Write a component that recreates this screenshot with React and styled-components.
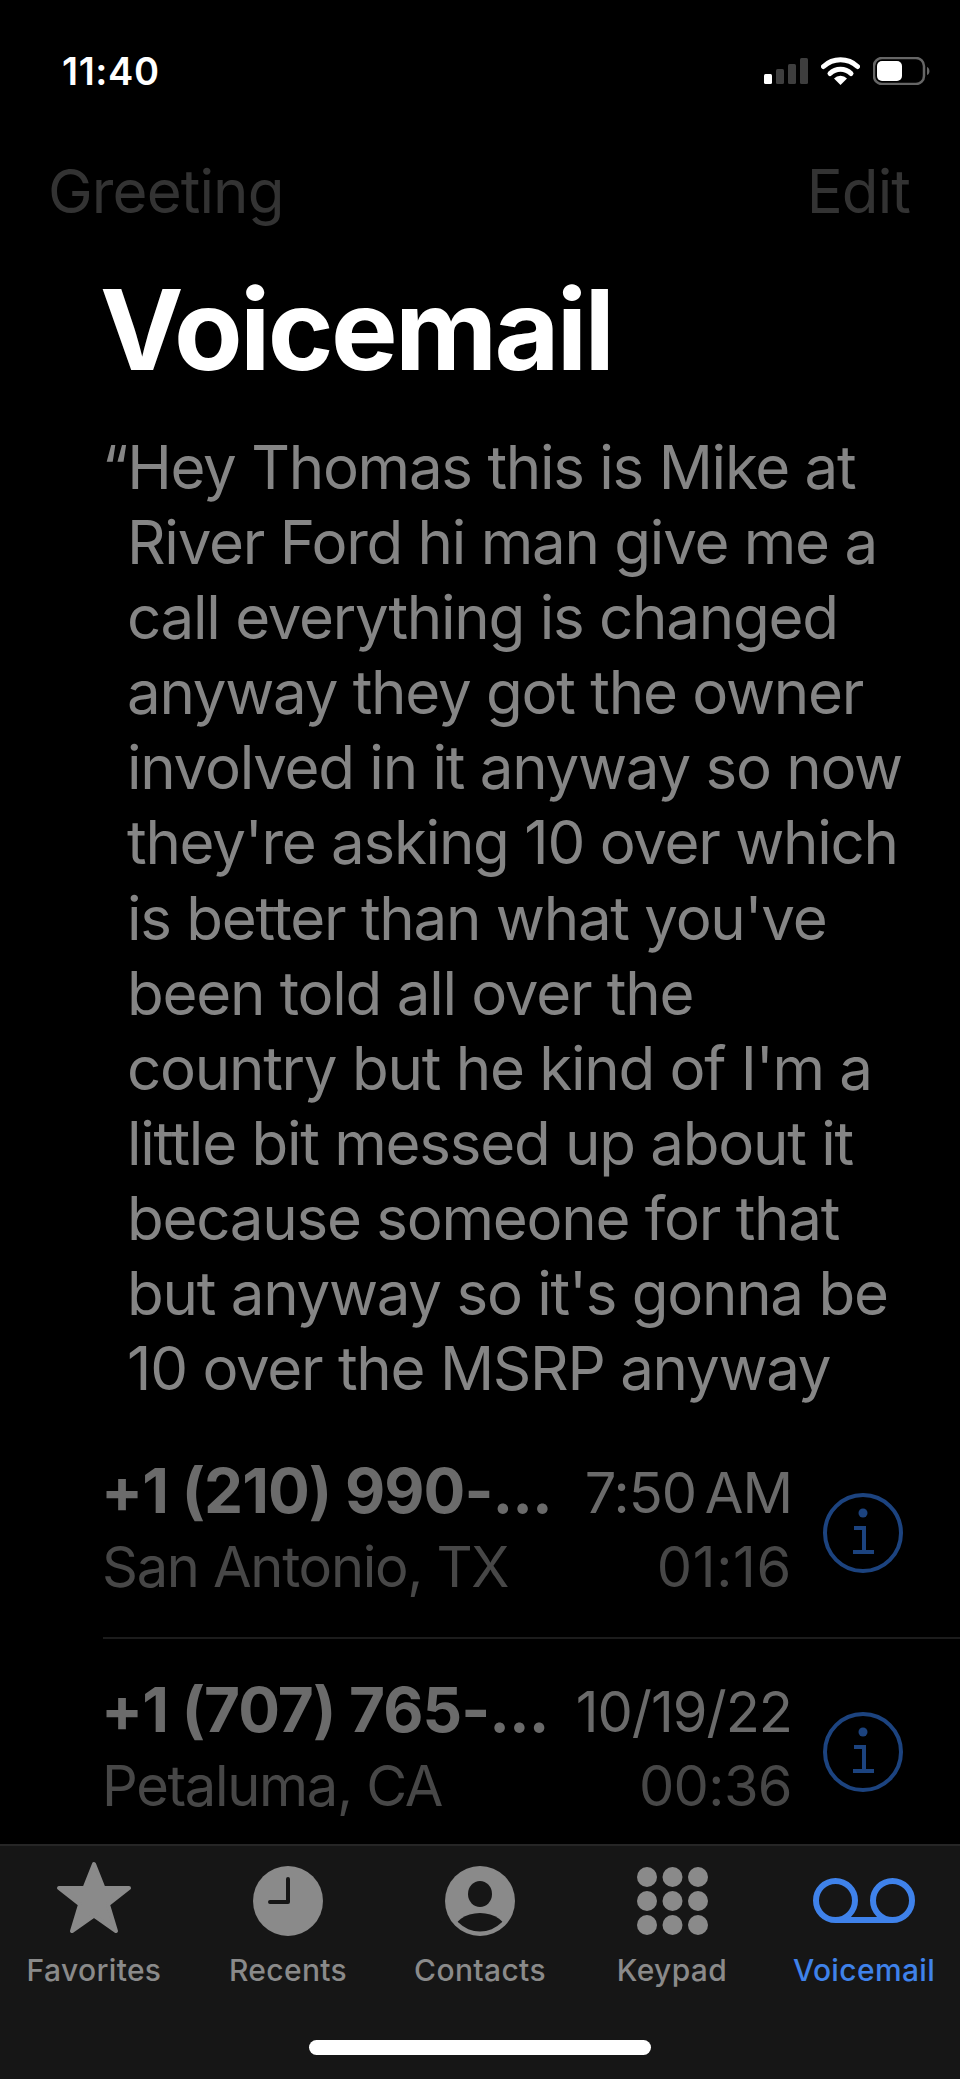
import React from "react";
import styled, { createGlobalStyle } from "styled-components";

const Global = createGlobalStyle`
  html, body { margin: 0; padding: 0; background: #000; }
  * { box-sizing: border-box; }
`;
const Screen = styled.div`
  width: 960px; height: 2079px; background: #000; overflow: hidden;
  display: flex; flex-direction: column;
  font-family: Inter, "Liberation Sans", sans-serif;
`;
const Main = styled.main`flex: 1; min-height: 0; overflow: hidden; display: flex; flex-direction: column;`;
const StatusBar = styled.div`
  height: 141px; flex: none; display: flex; justify-content: space-between; align-items: center;
  padding: 0 29px 0 62px;
`;
const Time = styled.span`color: #fff; font-size: 38px; font-weight: 600; letter-spacing: 0.6px;`;
const StatusIcons = styled.div`display: flex; align-items: center; gap: 13px;`;
const Nav = styled.div`
  height: 100px; flex: none; display: flex; justify-content: space-between; align-items: center;
  padding: 0 50px 0 48px;
  color: #333;
  font-size: 60px; font-weight: 400; letter-spacing: -0.9px;
`;
const Title = styled.h1`
  margin: 23px 0 0; padding-left: 100px; color: #fff; flex: none;
  font-size: 112px; line-height: 130px; font-weight: 700; letter-spacing: -2.7px;
`;
const Transcript = styled.div`
  margin: 36px 0 15px; padding-left: 127px; color: #858585; flex: none;
  font-size: 60px; line-height: 75.1px; letter-spacing: -1.25px; white-space: nowrap;
`;
const Line = styled.div`&:first-child { text-indent: -25px; }`;
const Row = styled.div`
  display: flex; align-items: center; margin-left: 103px; height: 218px; flex: none; padding-right: 57px;
  border-bottom: ${p => (p.$last ? "0" : "2px solid #1c1c1c")};
`;
const RowText = styled.div`flex: 1; min-width: 0; display: flex; flex-direction: column; gap: 2px;`;
const RowLine = styled.div`display: flex; justify-content: space-between; align-items: baseline; height: 74px; line-height: 74px; padding-right: 31px;`;
const Name = styled.span`color: #6b6b6b; font-size: 62px; font-weight: 700; letter-spacing: -0.95px; margin-left: -2px;`;
const When = styled.span`color: #6a6a6a; font-size: 56px; letter-spacing: -1px; word-spacing: -6px;`;
const Sub = styled.span`color: #474747; font-size: 56px; letter-spacing: -1.3px; margin-left: -1px;`;
const Duration = styled.span`color: #474747; font-size: 56px; letter-spacing: ${p => p.$track}px;`;
const InfoBox = styled.div`margin-top: 7px; display: flex;`;
const TabBar = styled.nav`
  height: 235px; flex: none; background: #161616; border-top: 2px solid #262626; position: relative;
  display: grid; grid-template-columns: repeat(5, 192px);
`;
const Tab = styled.div`
  display: flex; flex-direction: column; align-items: center; padding-top: 9px;
  color: ${p => (p.$active ? "#3f82ea" : "#8a8a8a")};
  &:first-child { padding-right: 4px; }
`;
const TabIcon = styled.div`height: 92px; display: flex; align-items: center; justify-content: center;`;
const TabLabel = styled.span`font-size: 30px; line-height: 36px; font-weight: 500; margin-top: 5px; letter-spacing: 0.35px;`;
const HomeBar = styled.div`
  position: absolute; left: 309px; top: 194px; width: 342px; height: 15px; border-radius: 8px; background: #fff;
`;

const Signal = () => (
  <svg width="44" height="26" viewBox="0 0 44 26">
    <rect x="0" y="16" width="8" height="10" rx="1.5" fill="#fff" />
    <rect x="12" y="11" width="8" height="15" rx="1.5" fill="#3e3e3e" />
    <rect x="24" y="6" width="8" height="20" rx="1.5" fill="#3e3e3e" />
    <rect x="36" y="0" width="8" height="26" rx="1.5" fill="#3e3e3e" />
  </svg>
);
const Wifi = () => (
  <svg width="39" height="28" viewBox="0 0 39 28">
    <path d="M2.5 9.5 A25 25 0 0 1 36.5 9.5" fill="none" stroke="#fff" strokeWidth="5" strokeLinecap="round" />
    <path d="M9 16.5 A15 15 0 0 1 30 16.5" fill="none" stroke="#fff" strokeWidth="5" strokeLinecap="round" />
    <path d="M13 21.5 A9 9 0 0 1 26 21.5 L19.5 28 Z" fill="#fff" />
  </svg>
);
const Battery = () => (
  <svg width="58" height="28" viewBox="0 0 58 28">
    <rect x="1" y="1" width="50" height="26" rx="8" fill="none" stroke="#666" strokeWidth="2.5" />
    <rect x="4" y="4" width="25" height="20" rx="5" fill="#fff" />
    <path d="M54 10 C57 11 57.5 17 54 18 Z" fill="#666" />
  </svg>
);
const Info = () => (
  <svg width="80" height="80" viewBox="0 0 80 80" fill="none">
    <circle cx="40" cy="40" r="38" stroke="#1c437f" strokeWidth="4" />
    <circle cx="40" cy="20" r="4.5" fill="#1c437f" />
    <path d="M31 35 H41 V58 M30 59 H51" stroke="#1c437f" strokeWidth="4" />
  </svg>
);
const Star = () => (
  <svg width="76" height="80" viewBox="0 0 76 80">
    <path d="M38 3 L47.5 27 L73 27 L52 43.5 L60 70 L38 54.5 L16 70 L24 43.5 L3 27 L28.5 27 Z"
      fill="currentColor" stroke="currentColor" strokeWidth="4" strokeLinejoin="round" />
  </svg>
);
const Clock = () => (
  <svg width="70" height="70" viewBox="0 0 70 70">
    <circle cx="35" cy="35" r="35" fill="currentColor" />
    <path d="M35 13 V36 H17" fill="none" stroke="#161616" strokeWidth="4" strokeLinecap="round" strokeLinejoin="round" />
  </svg>
);
const Contact = () => (
  <svg width="70" height="70" viewBox="0 0 70 70">
    <defs><clipPath id="cc"><circle cx="35" cy="35" r="30.5" /></clipPath></defs>
    <circle cx="35" cy="35" r="35" fill="currentColor" />
    <ellipse cx="35" cy="28" rx="12" ry="13" fill="#161616" />
    <ellipse cx="35" cy="67" rx="27" ry="20" fill="#161616" clipPath="url(#cc)" />
  </svg>
);
const Keypad = () => (
  <svg width="71" height="68" viewBox="0 0 71 68" fill="currentColor">
    {[10, 34, 58].map(y => [10, 35.5, 61].map(x => <circle key={`${x}-${y}`} cx={x} cy={y} r="10" />))}
  </svg>
);
const VoicemailIcon = () => (
  <svg width="102" height="46" viewBox="0 0 102 46" fill="none" stroke="currentColor" strokeWidth="6">
    <circle cx="22.5" cy="22.5" r="19.5" />
    <circle cx="79.5" cy="22.5" r="19.5" />
    <path d="M22.5 42 H79.5" />
  </svg>
);

const lines = [
  "“Hey Thomas this is Mike at",
  "River Ford hi man give me a",
  "call everything is changed",
  "anyway they got the owner",
  "involved in it anyway so now",
  "they're asking 10 over which",
  "is better than what you've",
  "been told all over the",
  "country but he kind of I'm a",
  "little bit messed up about it",
  "because someone for that",
  "but anyway so it's gonna be",
  "10 over the MSRP anyway",
];
const calls = [
  { name: "+1 (210) 990-...", when: "7:50 AM", place: "San Antonio, TX", len: "01:16", track: 0.7 },
  { name: "+1 (707) 765-...", when: "10/19/22", place: "Petaluma, CA", len: "00:36", track: -0.6, last: true },
];
const tabs = [
  { label: "Favorites", icon: <Star /> },
  { label: "Recents", icon: <Clock /> },
  { label: "Contacts", icon: <Contact /> },
  { label: "Keypad", icon: <Keypad /> },
  { label: "Voicemail", icon: <VoicemailIcon />, active: true },
];

export default function App() {
  return (
    <Screen>
      <Global />
      <Main>
        <StatusBar>
          <Time>11:40</Time>
          <StatusIcons><Signal /><Wifi /><Battery /></StatusIcons>
        </StatusBar>
        <Nav><span>Greeting</span><span>Edit</span></Nav>
        <Title>Voicemail</Title>
        <Transcript>{lines.map(l => <Line key={l}>{l}</Line>)}</Transcript>
        {calls.map(c => (
          <Row key={c.name} $last={c.last}>
            <RowText>
              <RowLine><Name>{c.name}</Name><When>{c.when}</When></RowLine>
              <RowLine><Sub>{c.place}</Sub><Duration $track={c.track}>{c.len}</Duration></RowLine>
            </RowText>
            <InfoBox><Info /></InfoBox>
          </Row>
        ))}
      </Main>
      <TabBar>
        {tabs.map(t => (
          <Tab key={t.label} $active={t.active}>
            <TabIcon>{t.icon}</TabIcon>
            <TabLabel>{t.label}</TabLabel>
          </Tab>
        ))}
        <HomeBar />
      </TabBar>
    </Screen>
  );
}
